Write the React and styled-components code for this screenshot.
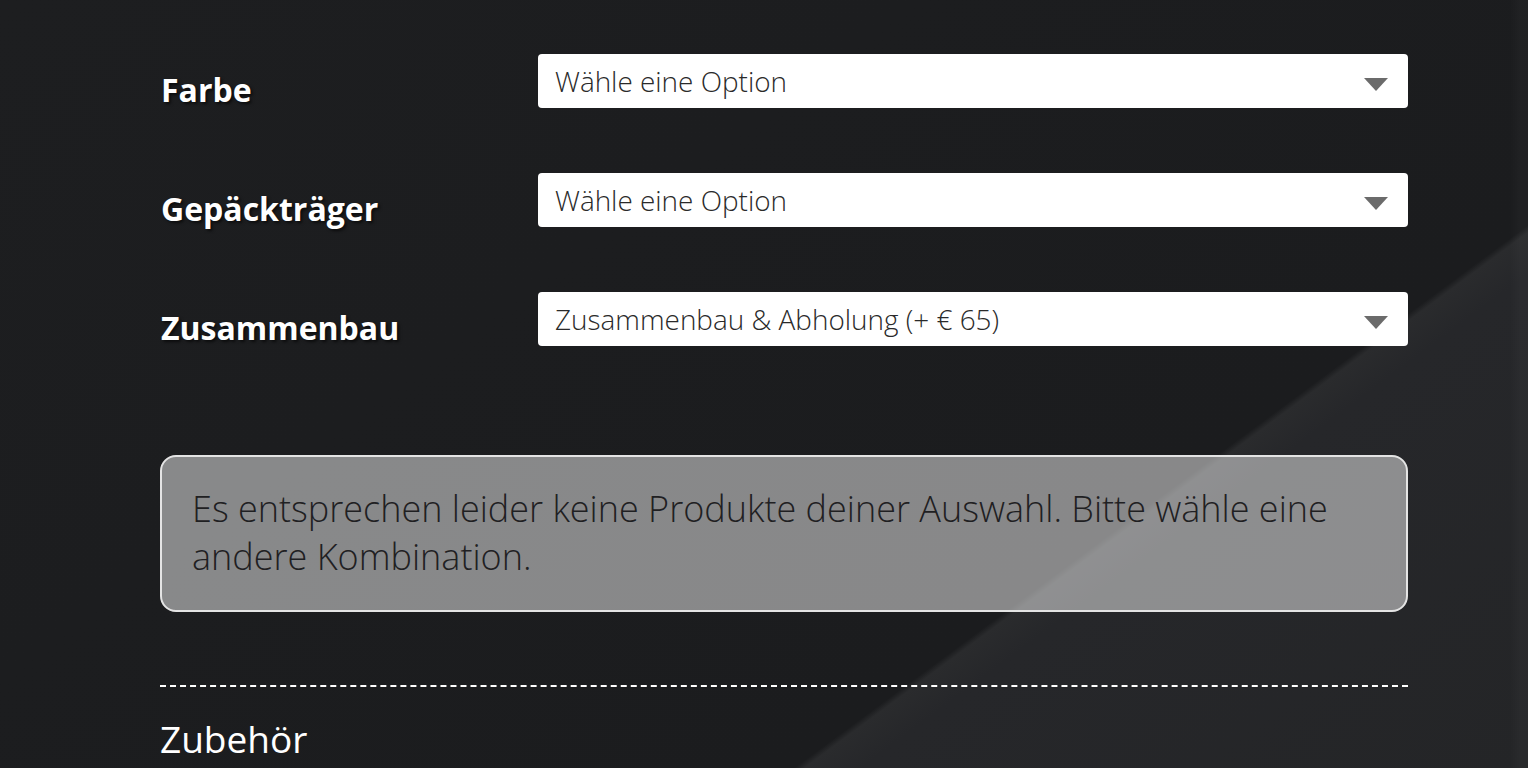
import React from "react";
import styled, { createGlobalStyle } from "styled-components";

const GlobalStyle = createGlobalStyle`
  html, body {
    margin: 0;
    padding: 0;
    height: 100%;
  }
  body {
    font-family: "Open Sans", "Noto Sans", sans-serif;
    overflow: hidden;
    background:
      linear-gradient(to right, transparent 1510px, rgba(255, 255, 255, 0.025) 1520px),
      linear-gradient(143.5deg, #1d1e20 0%, #1b1c1e 71.4%, #2a2b2d 71.8%, #26272a 74%, #242527 100%);
    background-attachment: fixed;
  }
`;

const Page = styled.div`
  width: 1248px;
  padding: 54px 0 0 160px;
`;

const Row = styled.div`
  display: grid;
  grid-template-columns: 378px 870px;
  height: 54px;
  margin-bottom: 65px;

  &:last-of-type {
    margin-bottom: 0;
  }
`;

const Label = styled.label`
  padding: 9px 0 0 1px;
  font-size: 32px;
  line-height: 54px;
  font-weight: 700;
  color: #ffffff;
  text-shadow: 2px 2px 3px rgba(0, 0, 0, 0.6);
`;

const SelectBox = styled.div`
  display: flex;
  align-items: center;
  justify-content: space-between;
  height: 54px;
  padding: 0 20px 0 17px;
  background: #ffffff;
  border-radius: 4px;
  font-size: 27.9px;
  font-weight: 300;
  color: #2a2a2a;
  cursor: pointer;
`;

const Arrow = styled.svg`
  width: 24px;
  height: 13px;
  margin-top: 7px;
  fill: #6b6b6b;
`;

const Notice = styled.div`
  margin-top: 109px;
  padding: 28px 30px 29px;
  border: 2px solid #e4e4e4;
  border-radius: 16px;
  background: rgba(255, 255, 255, 0.48);
  color: #1f2022;
  font-size: 36px;
  font-weight: 300;
  line-height: 48px;
`;

const Divider = styled.hr`
  margin: 73px 0 0;
  border: 0;
  border-top: 2px dashed #ffffff;
`;

const SectionTitle = styled.h2`
  margin: 0;
  padding-top: 28px;
  font-size: 37px;
  line-height: 48px;
  font-weight: 400;
  color: #ffffff;
`;

const ChevronDown = () => (
  <Arrow viewBox="0 0 24 13">
    <polygon points="0,0 24,0 12,13" />
  </Arrow>
);

const options = [
  { label: "Farbe", value: "Wähle eine Option" },
  { label: "Gepäckträger", value: "Wähle eine Option" },
  { label: "Zusammenbau", value: "Zusammenbau & Abholung (+ € 65)" },
];

export default function App() {
  return (
    <>
      <GlobalStyle />
      <Page>
        {options.map((o) => (
          <Row key={o.label}>
            <Label>{o.label}</Label>
            <SelectBox>
              <span>{o.value}</span>
              <ChevronDown />
            </SelectBox>
          </Row>
        ))}
        <Notice>
          Es entsprechen leider keine Produkte deiner Auswahl. Bitte wähle eine
          andere Kombination.
        </Notice>
        <Divider />
        <SectionTitle>Zubehör</SectionTitle>
      </Page>
    </>
  );
}
